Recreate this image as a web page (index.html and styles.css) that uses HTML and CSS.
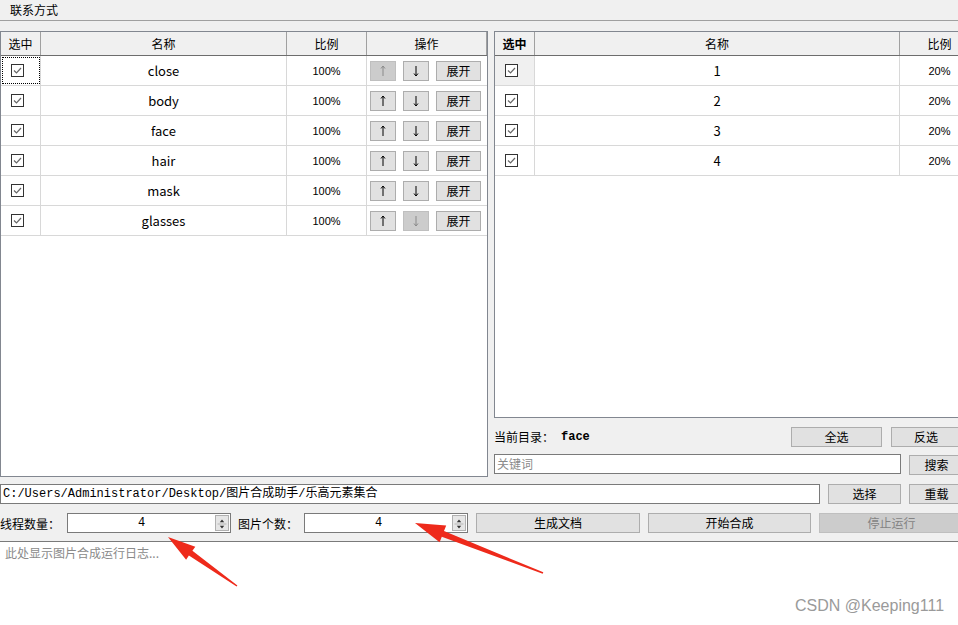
FILE: index.html
```html
<!DOCTYPE html>
<html lang="zh">
<head>
<meta charset="utf-8">
<title>图片合成助手</title>
<link rel="stylesheet" href="styles.css">
</head>
<body>
<div class="app">
  <div class="titlebar">联系方式</div>

  <div class="main">
    <div class="left-table table">
      <div class="thead lgrid">
        <div class="th">选中</div><div class="th">名称</div><div class="th">比例</div><div class="th">操作</div>
      </div>
      <div class="row lgrid">
        <div class="td chk focus"><span class="cb"><svg viewBox="0 0 11 11"><path d="M2 5.5 L4.5 8 L9 3" /></svg></span></div>
        <div class="td name">close</div><div class="td pct">100%</div>
        <div class="td ops"><button class="b arrow dis"><svg viewBox="0 0 24 18"><path d="M12 4 V14 M10 6.5 L12 4 L14 6.5" /></svg></button><button class="b arrow"><svg viewBox="0 0 24 18"><path d="M12 4 V14 M10 11.5 L12 14 L14 11.5" /></svg></button><button class="b exp">展开</button></div>
      </div>
      <div class="row lgrid">
        <div class="td chk"><span class="cb"><svg viewBox="0 0 11 11"><path d="M2 5.5 L4.5 8 L9 3" /></svg></span></div>
        <div class="td name">body</div><div class="td pct">100%</div>
        <div class="td ops"><button class="b arrow"><svg viewBox="0 0 24 18"><path d="M12 4 V14 M10 6.5 L12 4 L14 6.5" /></svg></button><button class="b arrow"><svg viewBox="0 0 24 18"><path d="M12 4 V14 M10 11.5 L12 14 L14 11.5" /></svg></button><button class="b exp">展开</button></div>
      </div>
      <div class="row lgrid">
        <div class="td chk"><span class="cb"><svg viewBox="0 0 11 11"><path d="M2 5.5 L4.5 8 L9 3" /></svg></span></div>
        <div class="td name">face</div><div class="td pct">100%</div>
        <div class="td ops"><button class="b arrow"><svg viewBox="0 0 24 18"><path d="M12 4 V14 M10 6.5 L12 4 L14 6.5" /></svg></button><button class="b arrow"><svg viewBox="0 0 24 18"><path d="M12 4 V14 M10 11.5 L12 14 L14 11.5" /></svg></button><button class="b exp">展开</button></div>
      </div>
      <div class="row lgrid">
        <div class="td chk"><span class="cb"><svg viewBox="0 0 11 11"><path d="M2 5.5 L4.5 8 L9 3" /></svg></span></div>
        <div class="td name">hair</div><div class="td pct">100%</div>
        <div class="td ops"><button class="b arrow"><svg viewBox="0 0 24 18"><path d="M12 4 V14 M10 6.5 L12 4 L14 6.5" /></svg></button><button class="b arrow"><svg viewBox="0 0 24 18"><path d="M12 4 V14 M10 11.5 L12 14 L14 11.5" /></svg></button><button class="b exp">展开</button></div>
      </div>
      <div class="row lgrid">
        <div class="td chk"><span class="cb"><svg viewBox="0 0 11 11"><path d="M2 5.5 L4.5 8 L9 3" /></svg></span></div>
        <div class="td name">mask</div><div class="td pct">100%</div>
        <div class="td ops"><button class="b arrow"><svg viewBox="0 0 24 18"><path d="M12 4 V14 M10 6.5 L12 4 L14 6.5" /></svg></button><button class="b arrow"><svg viewBox="0 0 24 18"><path d="M12 4 V14 M10 11.5 L12 14 L14 11.5" /></svg></button><button class="b exp">展开</button></div>
      </div>
      <div class="row lgrid">
        <div class="td chk"><span class="cb"><svg viewBox="0 0 11 11"><path d="M2 5.5 L4.5 8 L9 3" /></svg></span></div>
        <div class="td name">glasses</div><div class="td pct">100%</div>
        <div class="td ops"><button class="b arrow"><svg viewBox="0 0 24 18"><path d="M12 4 V14 M10 6.5 L12 4 L14 6.5" /></svg></button><button class="b arrow dis"><svg viewBox="0 0 24 18"><path d="M12 4 V14 M10 11.5 L12 14 L14 11.5" /></svg></button><button class="b exp">展开</button></div>
      </div>
    </div>

    <div class="right-col">
      <div class="right-table table">
        <div class="thead rgrid">
          <div class="th bold">选中</div><div class="th">名称</div><div class="th">比例</div>
        </div>
        <div class="row rgrid">
          <div class="td chk cur"><span class="cb"><svg viewBox="0 0 11 11"><path d="M2 5.5 L4.5 8 L9 3" /></svg></span></div>
          <div class="td num">1</div><div class="td pct">20%</div>
        </div>
        <div class="row rgrid">
          <div class="td chk"><span class="cb"><svg viewBox="0 0 11 11"><path d="M2 5.5 L4.5 8 L9 3" /></svg></span></div>
          <div class="td num">2</div><div class="td pct">20%</div>
        </div>
        <div class="row rgrid">
          <div class="td chk"><span class="cb"><svg viewBox="0 0 11 11"><path d="M2 5.5 L4.5 8 L9 3" /></svg></span></div>
          <div class="td num">3</div><div class="td pct">20%</div>
        </div>
        <div class="row rgrid">
          <div class="td chk"><span class="cb"><svg viewBox="0 0 11 11"><path d="M2 5.5 L4.5 8 L9 3" /></svg></span></div>
          <div class="td num">4</div><div class="td pct">20%</div>
        </div>
      </div>

      <div class="dir-row">
        <span class="dir-label">当前目录：</span><span class="dir-val">face</span>
        <span class="spacer"></span>
        <button class="b wbtn sel-all">全选</button>
        <button class="b wbtn inv">反选</button>
      </div>
      <div class="search-row">
        <div class="input kw">关键词</div>
        <button class="b wbtn search">搜索</button>
      </div>
    </div>
  </div>

  <div class="path-row">
    <div class="input path">C:/Users/Administrator/Desktop/图片合成助手/乐高元素集合</div>
    <button class="b wbtn choose">选择</button>
    <button class="b wbtn reload">重载</button>
  </div>

  <div class="ctrl-row">
    <span class="lbl first">线程数量：</span>
    <div class="spin"><span class="sv">4</span><span class="sbtn"><svg viewBox="0 0 12 18"><path class="tri" d="M3.5 7 L6 4 L8.5 7 Z M3.5 11 L6 14 L8.5 11 Z" /><path class="mid" d="M1 9 H11" /></svg></span></div>
    <span class="lbl second">图片个数：</span>
    <div class="spin"><span class="sv">4</span><span class="sbtn"><svg viewBox="0 0 12 18"><path class="tri" d="M3.5 7 L6 4 L8.5 7 Z M3.5 11 L6 14 L8.5 11 Z" /><path class="mid" d="M1 9 H11" /></svg></span></div>
    <button class="b cbtn gen">生成文档</button>
    <button class="b cbtn start">开始合成</button>
    <button class="b cbtn stop dis">停止运行</button>
  </div>

  <div class="log">
    <span class="placeholder">此处显示图片合成运行日志...</span>
    <span class="watermark">CSDN @Keeping111</span>
  </div>

  <svg class="arrows" width="958" height="625" viewBox="0 0 958 625">
    <polygon points="168,537 195.3,546.7 192.4,550.8 237.4,585.6 236.6,586.4 188.9,555.6 186.1,559.7" />
    <polygon points="415,523 446.2,525.5 444,531.1 543.3,572.3 542.7,573.7 441.8,536.7 439.6,542.3" />
  </svg>
</div>
</body>
</html>
```

FILE: styles.css
```css
html, body {
  margin: 0;
  padding: 0;
  overflow: hidden;
  background: #f0f0f0;
}
body {
  font-family: "Noto Sans CJK SC", "Liberation Sans", sans-serif;
  font-size: 12px;
  color: #000;
}
.app {
  position: relative;
  width: 958px;
  height: 625px;
  overflow: hidden;
}
.titlebar {
  height: 20px;
  line-height: 20px;
  padding-left: 10px;
  border-bottom: 1px solid #a0a0a0;
  background: #f0f0f0;
  font-size: 12px;
}
.main {
  display: flex;
  margin-top: 10px;
  gap: 6px;
}
.table {
  background: #fff;
  border: 1px solid #828790;
  box-sizing: border-box;
}
.left-table {
  width: 488px;
  height: 446px;
  flex: none;
}
.lgrid {
  display: grid;
  grid-template-columns: 40px 246px 80px 120px;
}
.rgrid {
  display: grid;
  grid-template-columns: 40px 365px 80px;
}
.thead {
  height: 23px;
  background: #f0f0f0;
  border-bottom: 1px solid #6d6d6d;
}
.th {
  display: flex;
  align-items: center;
  justify-content: center;
  border-right: 1px solid #a0a0a0;
  font-size: 12px;
}
.th.bold { font-weight: bold; }
.row {
  height: 29px;
  border-bottom: 1px solid #d8d8d8;
}
.td {
  display: flex;
  align-items: center;
  justify-content: center;
  border-right: 1px solid #d8d8d8;
}
.td.chk { justify-content: flex-start; padding-left: 10px; }
.td.focus { outline: 1px dotted #000; outline-offset: -2px; }
.td.cur { background: #f0f0f0; }
.cb {
  width: 13px;
  height: 13px;
  border: 1px solid #333;
  box-sizing: border-box;
  background: #fff;
  display: flex;
}
.cb svg { width: 11px; height: 11px; }
.cb path { fill: none; stroke: #666; stroke-width: 1.2; }
.name {
  font-family: "Noto Sans CJK SC", "Liberation Sans", sans-serif;
  font-size: 13px;
}
.num { font-size: 13px; font-family: "Noto Sans CJK SC", sans-serif; }
.pct {
  font-family: "Liberation Sans", sans-serif;
  font-size: 11px;
}
.ops {
  justify-content: flex-start;
  padding-left: 3px;
  gap: 7px;
  border-right: none;
}
.b {
  font-family: "Noto Sans CJK SC", "Liberation Sans", sans-serif;
  font-size: 12px;
  background: #e1e1e1;
  border: 1px solid #adadad;
  color: #000;
  padding: 0;
  margin: 0;
  height: 20px;
  line-height: 18px;
  box-sizing: border-box;
  flex: none;
}
.b.dis {
  background: #cccccc;
  border-color: #bfbfbf;
  color: #838383;
}
.arrow { width: 26px; display: flex; align-items: center; justify-content: center; }
.arrow svg { width: 24px; height: 18px; }
.arrow path { fill: none; stroke: #000; stroke-width: 1; }
.arrow.dis path { stroke: #8a8a8a; }
.exp { width: 45px; }
.right-col {
  flex: 1;
  display: flex;
  flex-direction: column;
  min-width: 0;
}
.right-table {
  width: 490px;
  height: 387px;
  border-right: none;
}
.dir-row {
  display: flex;
  align-items: center;
  height: 36px;
  padding-top: 1px;
  box-sizing: border-box;
}
.dir-label { font-size: 12px; }
.dir-val {
  font-family: "Liberation Mono", monospace;
  font-weight: bold;
  font-size: 12px;
  margin-left: 7px;
}
.spacer { flex: 1; }
.sel-all { width: 91px; margin-right: 9px; }
.inv { width: 70px; margin-right: -3px; }
.search-row {
  display: flex;
  align-items: flex-start;
  gap: 8px;
}
.input {
  background: #fff;
  border: 1px solid #7a7a7a;
  height: 20px;
  line-height: 18px;
  box-sizing: border-box;
  padding-left: 2px;
  white-space: nowrap;
  overflow: hidden;
  flex: none;
}
.kw { width: 407px; color: #8a8a8a; font-size: 12px; }
.search { width: 55px; margin-top: 1px; }
.path-row {
  display: flex;
  gap: 8px;
  margin-top: 7px;
}
.path {
  width: 820px;
  font-family: "Liberation Mono", "Noto Sans CJK SC", monospace;
  font-size: 12px;
}
.choose { width: 73px; }
.reload { width: 55px; }
.ctrl-row {
  display: flex;
  align-items: center;
  height: 20px;
  margin-top: 9px;
}
.lbl {
  font-size: 12px;
  flex: none;
  white-space: nowrap;
}
.lbl.first { width: 67px; }
.lbl.second { width: 66px; margin-left: 7px; }
.spin {
  width: 164px;
  height: 20px;
  box-sizing: border-box;
  border: 1px solid #7a7a7a;
  background: #fff;
  display: flex;
  flex: none;
}
.sv {
  flex: 1;
  text-align: center;
  line-height: 18px;
  font-family: "Liberation Mono", monospace;
  font-size: 12px;
}
.sbtn {
  width: 14px;
  display: flex;
  background: #e6e6e6;
  border: 1px solid #b0b0b0;
  box-sizing: border-box;
  margin: 1px 1px 1px 0;
}
.sbtn svg { width: 12px; height: 16px; }
.sbtn .tri { fill: #333; }
.sbtn .mid { stroke: #b0b0b0; stroke-width: 1; }
.cbtn { width: 164px; }
.gen { margin-left: 8px; }
.start { margin-left: 8px; width: 163px; }
.stop { margin-left: 8px; width: 145px; }
.log {
  position: relative;
  margin-top: 8px;
  height: 90px;
  background: #fff;
  border-top: 1px solid #7a7a7a;
}
.placeholder {
  display: block;
  padding: 2px 0 0 5px;
  color: #8a8a8a;
  font-size: 12px;
}
.watermark {
  position: absolute;
  left: 795px;
  top: 55px;
  color: #9a9a9a;
  font-family: "Liberation Sans", sans-serif;
  font-size: 16px;
}
.arrows {
  position: absolute;
  left: 0;
  top: 0;
  pointer-events: none;
}
.arrows polygon { fill: #ee2a1b; }
```
